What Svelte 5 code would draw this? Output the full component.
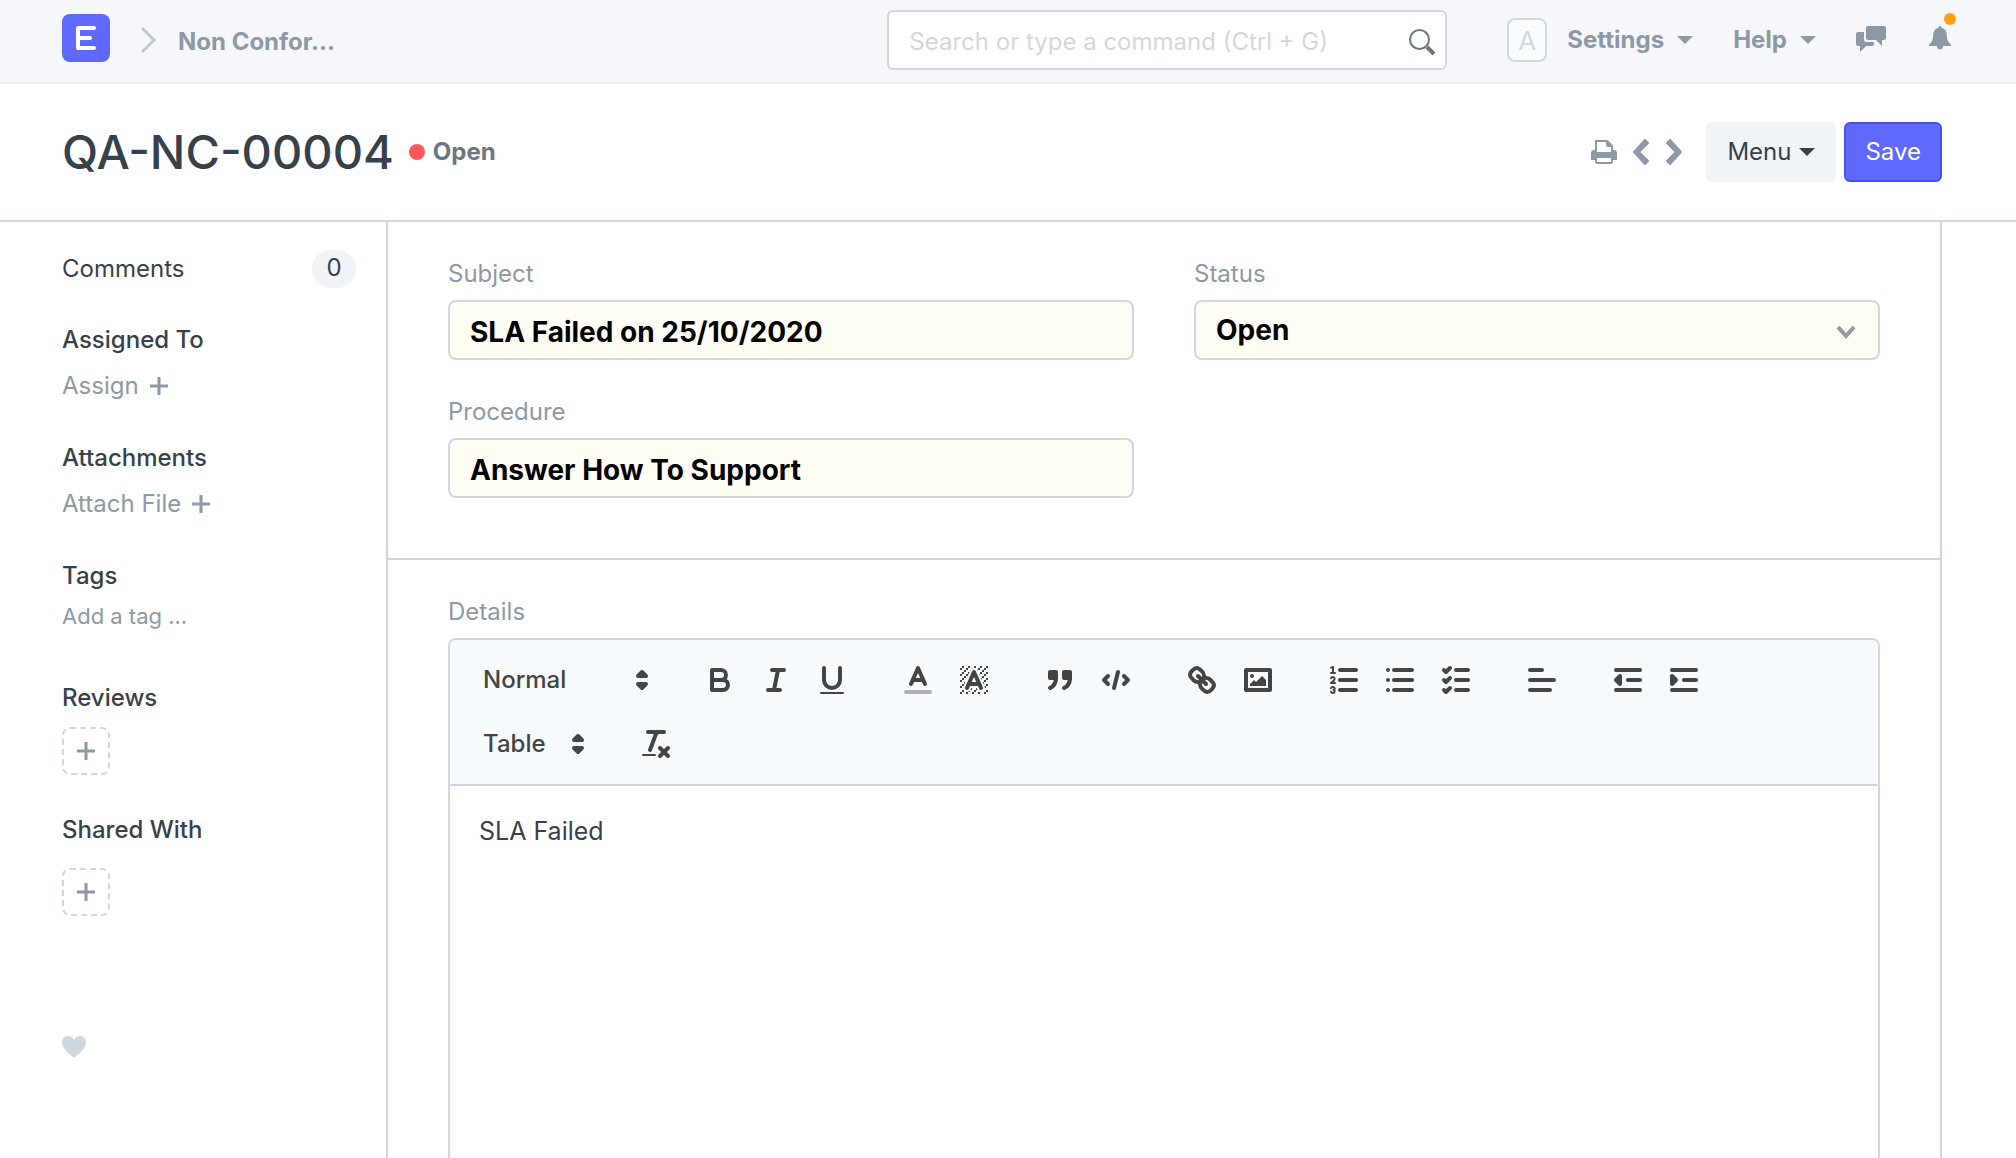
<script>
  const lines = (list) => list.map(([x1, y1, x2, y2]) => `M${x1},${y1}L${x2},${y2}`).join('');
  const strokes = {
    bold: ['M5,4H9.5A2.5,2.5,0,0,1,12,6.5A2.5,2.5,0,0,1,9.5,9H5Z', 'M5,9h5.5A2.5,2.5,0,0,1,13,11.5A2.5,2.5,0,0,1,10.5,14H5Z'],
    italic: [lines([[7, 4, 13, 4], [5, 14, 11, 14], [8, 14, 10, 4]])],
    underline: ['M5,3V9a4,4,0,0,0,8,0V3'],
    color: ['M5.5,11L9,3L12.5,11', 'M11.63,9H6.38'],
    background: ['M5.5,13L9,5L12.5,13', 'M11.63,11H6.38'],
    quote: ['M4,5h3v3h-3z', 'M11,5h3v3h-3z', 'M7,8c0,4.031-3,5-3,5', 'M14,8c0,4.031-3,5-3,5'],
    code: ['M5,7L3,9L5,11', 'M13,7L15,9L13,11', 'M10,5L8,13'],
    link: [
      'M7,7L11,11',
      'M8.9,4.577a3.476,3.476,0,0,1,.36,4.679A3.476,3.476,0,0,1,4.577,8.9C3.185,7.5,2.035,6.4,4.217,4.217S7.5,3.185,8.9,4.577Z',
      'M13.423,9.1a3.476,3.476,0,0,0-4.679-.36,3.476,3.476,0,0,0,.36,4.679c1.392,1.392,2.5,2.542,4.679.36S14.815,10.5,13.423,9.1Z'
    ],
    image: ['M3,4h12v10h-12z'],
    ordered: [lines([[7, 4, 15, 4], [7, 9, 15, 9], [7, 14, 15, 14]])],
    bullet: [lines([[6, 4, 15, 4], [6, 9, 15, 9], [6, 14, 15, 14], [3, 4, 3, 4], [3, 9, 3, 9], [3, 14, 3, 14]])],
    check: [lines([[9, 4, 15, 4], [9, 9, 15, 9], [9, 14, 15, 14]]), 'M3,4L4,5L6,3', 'M3,9L4,10L6,8', 'M3,14L4,15L6,13'],
    align: [lines([[3, 4, 9, 4], [3, 9, 15, 9], [3, 14, 13, 14]])],
    outdent: [lines([[3, 4, 15, 4], [9, 9, 15, 9], [3, 14, 15, 14]]), 'M5,7V11L3,9Z'],
    indent: [lines([[3, 4, 15, 4], [9, 9, 15, 9], [3, 14, 15, 14]]), 'M3,7V11L5,9Z'],
    clean: [lines([[5, 3, 13, 3], [6, 12, 9.35, 3], [11, 11, 15, 15], [15, 11, 11, 15]])]
  };
  const filled = ['quote', 'check', 'outdent', 'indent'];
  const thin = {
    ordered: [
      'M2.5,5.5H4.5',
      'M4.5,10.5h-2c0-.234,1.85-1.076,1.85-2.234A0.959,0.959,0,0,0,2.5,8.156',
      'M2.5,14.846a0.959,0.959,0,0,0,1.85-.109A0.7,0.7,0,0,0,3.75,14a0.688,0.688,0,0,0,.6-0.736,0.959,0.959,0,0,0-1.85-.109'
    ]
  };
  const dots = [
    [4, 4], [2, 6], [3, 5], [4, 7], [2, 12], [2, 9], [2, 15], [3, 8], [12, 2], [11, 3], [2, 3], [6, 2], [3, 2], [5, 3], [9, 2],
    [15, 14], [13, 7], [15, 5], [14, 6], [15, 8], [14, 9], [14, 3], [15, 2], [12, 5], [13, 4], [9, 14], [8, 15], [5, 15],
    [11, 15], [14, 15], [15, 11]
  ].map(([x, y]) => `M${x},${y}h1v1h-1z`).join('');
  const solids = {
    underline: 'M3.5,15h11a.5,.5,0,0,1,0,1h-11a.5,.5,0,0,1,0-1z',
    clean: 'M2.5,14h6a.5,.5,0,0,1,0,1h-6a.5,.5,0,0,1,0-1z',
    image: 'M6,6a1,1,0,1,1,0,2a1,1,0,1,1,0-2zM5,12V11L7,9L8,10L11,7L13,9V12Z',
    ordered: 'M3.5,6A0.5,0.5,0,0,1,3,5.5V3.085l-0.276.138A0.5,0.5,0,0,1,2.053,3c-0.124-.247-0.023-0.324.224-0.447l1-.5A0.5,0.5,0,0,1,4,2.5v3A0.5,0.5,0,0,1,3.5,6Z',
    background: dots + 'M6,6.868V6H5V7h.942zM6.817,5H6V6h.38zM4,11.439V11H3v1h.755zM4.63,10H4v1h.192zM10.832,4.2L11,4.582V4H10.708A1.948,1.948,0,0,1,10.832,4.2ZM7,4.582L7.168,4.2A1.929,1.929,0,0,1,7.292,4H7ZM8,13H7.683l-0.351.8a1.933,1.933,0,0,1-.124.2H8ZM9,3H8V3.282A1.985,1.985,0,0,1,9,3ZM13.447,10.174L13.808,11H14V10H13.37ZM3.775,14H3v1H4V14.314A1.97,1.97,0,0,1,3.775,14ZM12,6.868V6H11.62ZM12.933,9H13V8H12.495ZM6,14.926V15H7V14.316A1.993,1.993,0,0,1,6,14.926ZM10.668,13.8L10.317,13H10v1h0.792A1.947,1.947,0,0,1,10.668,13.8ZM14.332,12.2a1.99,1.99,0,0,1,.166.8H15V12H14.245Z'
  };
  const groups = [
    [['bold', 'Bold'], ['italic', 'Italic'], ['underline', 'Underline']],
    [['color', 'Text colour'], ['background', 'Background colour']],
    [['quote', 'Quote'], ['code', 'Code block']],
    [['link', 'Link'], ['image', 'Image']],
    [['ordered', 'Numbered list'], ['bullet', 'Bulleted list'], ['check', 'Check list']],
    [['align', 'Align']],
    [['outdent', 'Outdent'], ['indent', 'Indent']]
  ];
  let subject = $state('SLA Failed on 25/10/2020');
  let procedure = $state('Answer How To Support');
  let status = $state('Open');
</script>

{#snippet tool(name, label)}
  <button type="button" class="tool" aria-label={label}>
    <svg viewBox="0 0 18 18">
      {#if name === 'color'}<path class="stroke faint" d="M3,15H15" />{/if}
      {#each strokes[name] as d}<path class="stroke" class:filled={filled.includes(name)} d={d} />{/each}
      {#each thin[name] ?? [] as d}<path class="stroke thin" d={d} />{/each}
      {#if solids[name]}<path class="solid" d={solids[name]} />{/if}
    </svg>
  </button>
{/snippet}

{#snippet plus()}
  <svg class="plus" viewBox="0 0 18 18"><path d="M0,9H18M9,0V18" /></svg>
{/snippet}

{#snippet updown()}
  <svg class="updown" viewBox="0 0 18 18">
    <path class="stroke filled" d="M7,11L9,13L11,11Z" /><path class="stroke filled" d="M7,7L9,5L11,7Z" />
  </svg>
{/snippet}

<div class="page">
  <header class="navbar">
    <nav class="crumbs" aria-label="Breadcrumb">
      <a class="logo" href="#home" aria-label="Home">
        <svg viewBox="0 0 48 48"><path d="M32,14H16V34H32M16,24H28" /></svg>
      </a>
      <svg class="sep" viewBox="0 0 16 28"><path d="M2,2L14,14L2,26" /></svg>
      <a class="crumb" href="#list">Non Confor...</a>
    </nav>
    <div class="search">
      <input type="search" aria-label="Search" placeholder="Search or type a command (Ctrl + G)" />
      <svg viewBox="0 0 28 28"><circle cx="11.5" cy="11.5" r="9.5" /><path class="handle" d="M19,19L26,26" /></svg>
    </div>
    <div class="links">
      <span class="avatar">A</span>
      <button type="button" class="nav-btn">Settings <i class="caret"></i></button>
      <button type="button" class="nav-btn help">Help <i class="caret"></i></button>
      <button type="button" class="icon-btn chat" aria-label="Chat">
        <svg viewBox="0 0 30 26">
          <path d="M12,0H28a2,2,0,0,1,2,2V12a2,2,0,0,1-2,2H26V20L20,14H12a2,2,0,0,1-2-2V2a2,2,0,0,1,2-2z" />
          <path d="M2,6H8V14a2,2,0,0,0,2,2H18V18a2,2,0,0,1-2,2H10L4,26V20H2a2,2,0,0,1-2-2V8a2,2,0,0,1,2-2z" />
        </svg>
      </button>
      <button type="button" class="icon-btn bell" aria-label="Notifications">
        <svg viewBox="0 0 22 24"><path d="M11,0a1.5,1.5,0,0,1,1.5,1.7C16,2.5 17.5,5 17.7,8C18,14 19,16 22,18.5V20H14a3,3.5,0,0,1-6,0H0V18.5C3,16 4,14 4.300,8C4.5,5 6,2.5 9.5,1.7A1.5,1.5,0,0,1,11,0z" /></svg>
        <span class="dot"></span>
      </button>
    </div>
  </header>

  <div class="head">
    <h1>QA-NC-00004</h1>
    <span class="indicator">Open</span>
    <div class="actions">
      <button type="button" class="icon-btn" aria-label="Print">
        <svg class="print" viewBox="0 0 26 24">
          <path class="outline" d="M5,13V1H16L21,6V13" />
          <path d="M15,1L21,7H17a2,2,0,0,1-2-2z" />
          <path fill-rule="evenodd" d="M3,10H4V12H22V10H23a3,3,0,0,1,3,3V20H22V22a2,2,0,0,1-2,2H6a2,2,0,0,1-2-2V20H0V13a3,3,0,0,1,3-3zM6,18V22H20V18z" />
        </svg>
      </button>
      <button type="button" class="icon-btn prev" aria-label="Previous"><svg class="arrow" viewBox="0 0 16 26"><path d="M12,1L15,4L6,13L15,22L12,25L1,13Z" /></svg></button>
      <button type="button" class="icon-btn next" aria-label="Next"><svg class="arrow" viewBox="0 0 16 26"><path d="M4,1L1,4L10,13L1,22L4,25L15,13Z" /></svg></button>
      <button type="button" class="btn menu">Menu <i class="caret"></i></button>
      <button type="button" class="btn save">Save</button>
    </div>
  </div>

  <div class="body">
    <aside>
      <div class="comments"><a href="#comments">Comments</a><span class="badge">0</span></div>
      <section><h2>Assigned To</h2><button type="button" class="link">Assign {@render plus()}</button></section>
      <section><h2>Attachments</h2><button type="button" class="link">Attach File {@render plus()}</button></section>
      <section class="tags"><h2>Tags</h2><input type="text" aria-label="Add a tag" placeholder="Add a tag ..." /></section>
      <section class="reviews"><h2>Reviews</h2><button type="button" class="add" aria-label="Add review">{@render plus()}</button></section>
      <section class="shared"><h2>Shared With</h2><button type="button" class="add" aria-label="Share">{@render plus()}</button></section>
      <button type="button" class="icon-btn like" aria-label="Like">
        <svg viewBox="0 0 24 22"><path d="M12,22C8,18.5 0,13 0,6.5C0,2.5 2.8,0 6,0C8.8,0 11,2 12,4C13,2 15.2,0 18,0C21.2,0 24,2.5 24,6.5C24,13 16,18.5 12,22z" /></svg>
      </button>
    </aside>

    <main>
      <section class="fields">
        <div class="field"><label for="subject">Subject</label><input id="subject" type="text" bind:value={subject} /></div>
        <div class="field">
          <label for="status">Status</label>
          <div class="pick">
            <select id="status" bind:value={status}><option>Open</option><option>Resolved</option><option>Cancelled</option></select>
            <svg viewBox="0 0 20 14"><path d="M2,2L10,11L18,2" /></svg>
          </div>
        </div>
        <div class="field"><label for="procedure">Procedure</label><input id="procedure" type="text" bind:value={procedure} /></div>
      </section>
      <section class="details">
        <label for="details">Details</label>
        <div class="editor">
          <div class="toolbar" role="toolbar" aria-label="Formatting">
            <div class="picker style"><select aria-label="Text style"><option>Normal</option><option>Heading 1</option><option>Heading 2</option></select>{@render updown()}</div>
            {#each groups as group}
              <div class="group">{#each group as [name, label]}{@render tool(name, label)}{/each}</div>
            {/each}
            <div class="picker table"><select aria-label="Table"><option>Table</option><option>Row</option></select>{@render updown()}</div>
            <div class="group">{@render tool('clean', 'Clear formatting')}</div>
          </div>
          <textarea id="details">SLA Failed</textarea>
        </div>
      </section>
    </main>
  </div>
</div>

<style>
  :global(body) { margin: 0; overflow: hidden; background: #fff; }
  .page {
    display: flex; flex-direction: column; height: 100vh; overflow: hidden;
    font: 24px/34px Inter, "Open Sans", sans-serif; color: #36414c;
  }
  .page :is(*) { box-sizing: border-box; }
  button, input, select, textarea { font: inherit; color: inherit; background: none; border: 0; padding: 0; margin: 0; outline: 0; }
  select { appearance: none; }
  a { color: inherit; text-decoration: none; }
  svg { display: block; fill: none; flex: none; }
  h1, h2 { margin: 0; font-weight: 500; }
  h2 { font-size: 24px; line-height: 34px; }

  .navbar {
    display: flex; align-items: center; flex: none; height: 84px; padding: 0 65px 6px 62px;
    background: #f5f7fb; border-bottom: 2px solid #ebeff2; color: #8d99a6; font-weight: 700;
  }
  .crumbs { display: flex; align-items: center; flex: 1; }
  .logo { width: 48px; height: 48px; border-radius: 8px; background: #5f68ff; }
  .logo svg { stroke: #fff; stroke-width: 4; stroke-linecap: round; stroke-linejoin: round; }
  .sep { width: 16px; height: 28px; margin: 4px 22px 0 30px; stroke: #c0c9d2; stroke-width: 3; }
  .crumb { padding-top: 8px; }
  .search { position: relative; width: 560px; padding-top: 4px; }
  .search input {
    display: block; width: 100%; height: 60px; padding: 2px 64px 0 20px; border: 2px solid #d1d8dd; border-radius: 6px;
    background: #fff; font-weight: 400;
  }
  .search input::placeholder { color: #d1d8dd; opacity: 1; }
  .search svg { position: absolute; right: 11px; top: 22px; width: 28px; height: 28px; stroke: #6c7680; stroke-width: 2; }
  .search .handle { stroke-width: 4; }
  .links { display: flex; align-items: center; margin-left: 60px; padding-top: 4px; }
  .avatar {
    width: 40px; height: 44px; margin-right: 20px; border: 2px solid #d1d8dd; border-radius: 8px; background: #fafbfc;
    color: #d1d8dd; font-size: 26px; font-weight: 400; line-height: 42px; text-align: center;
  }
  .nav-btn { display: flex; align-items: center; gap: 13px; font-weight: 700; }
  .caret { border: 8px solid transparent; border-top-color: currentColor; border-bottom: 0; }
  .help { margin-left: 40px; }
  .icon-btn { position: relative; display: block; color: #8d99a6; }
  .icon-btn svg { fill: currentColor; }
  .chat { margin: 0 0 2px 40px; }
  .chat svg { width: 30px; height: 26px; }
  .bell { margin: 0 0 4px 43px; }
  .bell svg { width: 22px; height: 24px; }
  .dot { position: absolute; top: -13px; right: -5px; width: 12px; height: 12px; border-radius: 50%; background: #ffa00a; }

  .head { display: flex; align-items: center; flex: none; height: 138px; padding: 0 74px 0 62px; border-bottom: 2px solid #d1d8dd; }
  h1 { font-size: 47px; line-height: 60px; }
  .indicator { display: flex; align-items: center; gap: 8px; margin-left: 15px; font-weight: 700; color: #6c7680; }
  .indicator::before { content: ""; width: 16px; height: 16px; border-radius: 50%; background: #ff5858; }
  .actions { display: flex; align-items: center; margin-left: auto; }
  .print { width: 26px; height: 24px; }
  .print .outline { fill: none; stroke: currentColor; stroke-width: 2; }
  .arrow { width: 16px; height: 26px; stroke: currentColor; stroke-width: 2; stroke-linejoin: round; }
  .prev { margin-left: 16px; }
  .next { margin: 0 24px 0 17px; }
  .btn { display: flex; align-items: center; gap: 8px; height: 60px; padding: 0 21px; border-radius: 6px; }
  .menu { background: #f0f4f7; }
  .save { margin-left: 8px; padding: 0 19px; border: 2px solid #444fff; background: #5f68ff; color: #fff; }

  .body { display: grid; grid-template-columns: 386px 1fr; flex: 1; min-height: 0; padding-right: 74px; }
  aside { padding: 28px 30px 0 62px; }
  .comments { display: flex; justify-content: space-between; align-items: center; margin-bottom: 35px; }
  .badge { width: 44px; height: 38px; border-radius: 19px; background: #f0f4f7; line-height: 36px; text-align: center; }
  aside section { display: flex; flex-direction: column; align-items: flex-start; gap: 12px; margin-bottom: 38px; }
  .link { display: flex; align-items: center; gap: 11px; color: #8d99a6; }
  .plus { width: 18px; height: 18px; stroke: #8d99a6; stroke-width: 3; }
  aside .tags { gap: 6px; margin-bottom: 48px; }
  .tags input { width: 100%; height: 34px; font-size: 22px; }
  .tags input::placeholder { color: #8d99a6; opacity: 1; }
  .add { display: grid; place-items: center; width: 48px; height: 48px; border: 2px dashed #d1d8dd; border-radius: 8px; }
  aside .shared { gap: 21px; margin-bottom: 120px; }
  .like { color: #d1d8dd; }
  .like svg { width: 24px; height: 22px; }

  main { border: solid #d1d8dd; border-width: 0 2px; }
  label { display: block; color: #8d99a6; }
  .fields { display: grid; grid-template-columns: 1fr 1fr; gap: 35px 60px; padding: 35px 60px 60px; border-bottom: 2px solid #d1d8dd; }
  .field label { margin-bottom: 9px; }
  .field input, .pick select {
    display: block; width: 100%; height: 60px; padding: 4px 20px 0; border: 2px solid #d1d8dd; border-radius: 8px;
    background: #fffdf4; color: #000; font-size: 28px; font-weight: 700;
  }
  .pick { position: relative; }
  .pick select { padding: 0 20px; }
  .pick svg { position: absolute; right: 24px; top: 25px; width: 20px; height: 14px; stroke: #8d99a6; stroke-width: 4; }
  .details { padding: 35px 60px 0; }
  .details label { margin-bottom: 9px; }
  .editor { border: 2px solid #d1d8dd; border-radius: 8px; overflow: hidden; }
  .toolbar { display: flex; flex-wrap: wrap; gap: 16px 30px; padding: 16px; background: #f7fafc; border-bottom: 2px solid #d1d8dd; color: #444; font-weight: 500; }
  .group { display: flex; }
  .tool { width: 56px; height: 48px; padding: 6px 10px; }
  .tool svg { width: 36px; height: 36px; }
  .stroke { fill: none; stroke: #444; stroke-width: 2; stroke-linecap: round; stroke-linejoin: round; }
  .thin { stroke-width: 1; }
  .faint { opacity: .4; }
  .filled, .solid { fill: #444; }
  .picker { position: relative; height: 48px; }
  .style { width: 196px; }
  .table { width: 132px; }
  .picker select { width: 100%; height: 48px; padding: 0 0 0 17px; }
  .updown { position: absolute; right: 2px; top: 6px; width: 36px; height: 36px; pointer-events: none; }
  textarea { display: block; width: 100%; height: 480px; padding: 26px 29px; font-size: 25px; line-height: 38px; resize: none; }
</style>
